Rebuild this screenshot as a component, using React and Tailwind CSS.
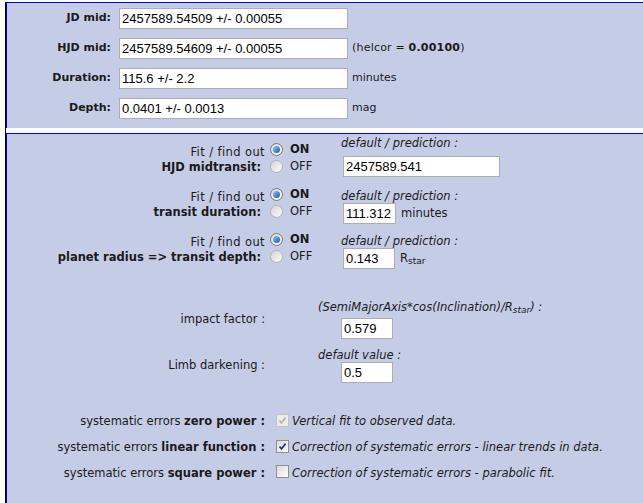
import React from 'react'

const top = [
  { label: 'JD mid:', value: '2457589.54509 +/- 0.00055' },
  { label: 'HJD mid:', value: '2457589.54609 +/- 0.00055', unit: 'helcor' },
  { label: 'Duration:', value: '115.6 +/- 2.2', unit: 'minutes' },
  { label: 'Depth:', value: '0.0401 +/- 0.0013', unit: 'mag' },
]

const fits = [
  { label: 'HJD midtransit:', value: '2457589.541', w: 'w-[157px]' },
  { label: 'transit duration:', value: '111.312', w: 'w-[53px]', unit: 'minutes' },
  { label: 'planet radius => transit depth:', value: '0.143', w: 'w-[52px]', unit: 'rstar' },
]

const sys = [
  { bold: 'zero power :', text: 'Vertical fit to observed data.', checked: true, disabled: true },
  { bold: 'linear function :', text: 'Correction of systematic errors - linear trends in data.', checked: true },
  { bold: 'square power :', text: 'Correction of systematic errors - parabolic fit.' },
]

function Field({ value, w }) {
  return (
    <input
      readOnly
      defaultValue={value}
      className={`${w} h-[21px] border border-[#abadb3] bg-white px-[2px] font-['Liberation_Sans',Arial,sans-serif] text-[13px] text-black outline-none`}
    />
  )
}

function Radio({ on }) {
  return (
    <span
      className={`inline-flex w-[13px] h-[13px] shrink-0 items-center justify-center rounded-full border ${
        on ? 'border-[#7a7a7a]' : 'border-[#b4b4b4]'
      } bg-linear-to-br from-[#d6d6d6] to-[#fbfbfb]`}
    >
      {on && <span className="w-[7px] h-[7px] rounded-full bg-linear-to-br from-[#8cc8f4] to-[#1a5a9e]" />}
    </span>
  )
}

function Box({ checked, disabled }) {
  return (
    <span
      className={`inline-flex w-[13px] h-[13px] shrink-0 items-center justify-center border ${
        disabled ? 'border-[#c4c4c4] bg-[#ececec]' : 'border-[#8f8f8f] bg-linear-to-br from-[#dadada] to-white'
      }`}
    >
      {checked && (
        <svg width="9" height="9" viewBox="0 0 9 9">
          <path
            d="M1.5 4.5 L3.5 6.8 L7.6 1.6"
            stroke={disabled ? '#b2b2b2' : '#1f3a7a'}
            strokeWidth="1.7"
            fill="none"
          />
        </svg>
      )}
    </span>
  )
}

export default function App() {
  return (
    <div className="min-h-screen bg-white pl-[5px] font-['DejaVu_Sans',Verdana,sans-serif] text-[11px] text-[#1a1a1a]">
      <div className="min-h-screen border-l border-black">
        {/* results */}
        <div className="mt-[2px] border-t border-l border-[#0000ff] bg-[#c5cde6] pt-[5px] pb-[9px] flex flex-col gap-[9px]">
          {top.map(({ label, value, unit }) => (
            <div key={label} className="flex items-center h-[21px]">
              <div className="w-[104px] text-right font-bold">{label}</div>
              <div className="ml-[8px]">
                <Field value={value} w="w-[229px]" />
              </div>
              {unit === 'helcor' && (
                <span className="ml-[4px] tracking-[0.2px]">
                  (helcor = <b>0.00100</b>)
                </span>
              )}
              {unit && unit !== 'helcor' && <span className="ml-[4px]">{unit}</span>}
            </div>
          ))}
        </div>

        {/* fit settings */}
        <div className="mt-[5px] min-h-[370px] border-t border-l border-[#0000ff] bg-[#c5cde6] pt-[7px] pb-[20px] text-[11.5px]">
          {fits.map(({ label, value, w, unit }, i) => (
            <div key={label} className="flex h-[45px]">
              <div className="w-[258px] pt-[4px] text-right leading-[15px]">
                <div className="tracking-[0.4px]">Fit / find out</div>
                <div className="font-bold pr-[4px]">{label}</div>
              </div>
              <div className="w-[76px] pl-[5px]">
                <div className="h-[17px] flex items-center gap-[7px]">
                  <Radio on />
                  <b>ON</b>
                </div>
                <div className="h-[17px] flex items-center gap-[7px]">
                  <Radio />
                  <span>OFF</span>
                </div>
              </div>
              <div className={i === 0 ? '-mt-[4px]' : 'pt-[4px]'}>
                <div className="italic leading-[13px]">default / prediction :</div>
                <div className={`flex items-center ml-[2px] ${i === 0 ? 'mt-[6px]' : ''}`}>
                  <Field value={value} w={w} />
                  {unit === 'minutes' && <span className="ml-[5px]">minutes</span>}
                  {unit === 'rstar' && (
                    <span className="ml-[5px]">
                      R<sub className="text-[9px]">star</sub>
                    </span>
                  )}
                </div>
              </div>
            </div>
          ))}

          <div className="mt-[25px] flex items-center">
            <div className="w-[258px] text-right">impact factor :</div>
            <div className="ml-[53px]">
              <div className="italic leading-[13px]">
                (SemiMajorAxis*cos(Inclination)/R<sub className="text-[9px]">star</sub>) :
              </div>
              <div className="mt-[4px] ml-[23px]">
                <Field value="0.579" w="w-[52px]" />
              </div>
            </div>
          </div>

          <div className="mt-[10px] flex items-center">
            <div className="w-[258px] text-right">Limb darkening :</div>
            <div className="ml-[53px]">
              <div className="italic leading-[13px]">default value :</div>
              <div className="ml-[23px]">
                <Field value="0.5" w="w-[52px]" />
              </div>
            </div>
          </div>

          <div className="mt-[26px]">
            {sys.map(({ bold, text, checked, disabled }) => (
              <div key={bold} className="flex items-center h-[26px]">
                <div className="w-[258px] text-right">
                  systematic errors <b>{bold}</b>
                </div>
                <span className="ml-[11px]">
                  <Box checked={checked} disabled={disabled} />
                </span>
                <i className="ml-[3px]">{text}</i>
              </div>
            ))}
          </div>
        </div>
      </div>
    </div>
  )
}
